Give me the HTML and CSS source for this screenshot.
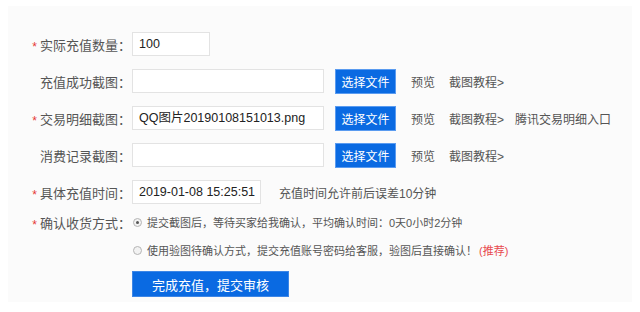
FILE: index.html
```html
<!DOCTYPE html>
<html lang="zh-CN">
<head>
<meta charset="utf-8">
<title>充值提交</title>
<link rel="stylesheet" href="styles.css">
</head>
<body>
<div class="panel">
  <div class="row">
    <div class="label"><span class="star">*</span>实际充值数量：</div>
    <div class="input small">100</div>
  </div>
  <div class="row">
    <div class="label">充值成功截图：</div>
    <div class="input wide"></div>
    <button class="btn">选择文件</button>
    <a class="link">预览</a>
    <a class="link">截图教程&gt;</a>
  </div>
  <div class="row">
    <div class="label"><span class="star">*</span>交易明细截图：</div>
    <div class="input wide">QQ图片20190108151013.png</div>
    <button class="btn">选择文件</button>
    <a class="link">预览</a>
    <a class="link">截图教程&gt;</a>
    <a class="link entry">腾讯交易明细入口</a>
  </div>
  <div class="row">
    <div class="label">消费记录截图：</div>
    <div class="input wide"></div>
    <button class="btn">选择文件</button>
    <a class="link">预览</a>
    <a class="link">截图教程&gt;</a>
  </div>
  <div class="row time-row">
    <div class="label"><span class="star">*</span>具体充值时间：</div>
    <div class="input time">2019-01-08 15:25:51</div>
    <span class="hint">充值时间允许前后误差10分钟</span>
  </div>
  <div class="row radio-row first">
    <div class="label"><span class="star">*</span>确认收货方式：</div>
    <span class="radio checked"></span>
    <span class="radio-text">提交截图后，等待买家给我确认，平均确认时间：0天0小时2分钟</span>
  </div>
  <div class="row radio-row second">
    <div class="label"></div>
    <span class="radio"></span>
    <span class="radio-text">使用验图待确认方式，提交充值账号密码给客服，验图后直接确认！<span class="rec">(推荐)</span></span>
  </div>
  <div class="row submit-row">
    <div class="label"></div>
    <button class="submit">完成充值，提交审核</button>
  </div>
</div>
</body>
</html>
```
FILE: styles.css
```css
html, body {
  margin: 0;
  padding: 0;
  background: #ffffff;
}
body {
  font-family: "Liberation Sans", "Noto Sans CJK SC", sans-serif;
  color: #555;
}
.panel {
  margin: 6px 8px 0 8px;
  height: 296px;
  background: #fbfbfb;
  padding-top: 26px;
  box-sizing: border-box;
}
.row {
  display: flex;
  align-items: center;
  height: 24px;
  margin-bottom: 13px;
}
.label {
  width: 123px;
  margin-right: 1px;
  text-align: right;
  font-size: 13px;
  color: #555;
  flex: none;
  white-space: nowrap;
}
.star {
  color: #e53935;
  font-size: 12px;
  margin-right: 3px;
  position: relative;
  top: 1px;
}
.input {
  height: 24px;
  box-sizing: border-box;
  border: 1px solid #e3e3e3;
  background: #fff;
  font-size: 12.5px;
  color: #222;
  padding-left: 6px;
  line-height: 22px;
  white-space: nowrap;
  overflow: hidden;
  flex: none;
}
.input.small { width: 78px; }
.input.wide { width: 192px; }
.input.time { width: 129px; }
.btn {
  margin-left: 11px;
  width: 61px;
  height: 25px;
  box-sizing: border-box;
  background: #0a6ae2;
  border: 1px solid #5a9bf0;
  color: #fff;
  font-family: inherit;
  font-size: 12px;
  padding: 0;
  flex: none;
}
.link {
  font-size: 12px;
  color: #555;
  margin-left: 14px;
  white-space: nowrap;
}
.btn + .link { margin-left: 15px; }
.link.entry { margin-left: 11px; }
.hint {
  margin-left: 18px;
  font-size: 12px;
  color: #555;
}
.time-row { margin-bottom: 10px; }
.radio-row {
  height: 16px;
}
.radio-row.first { margin-bottom: 12px; }
.radio {
  width: 9px;
  height: 9px;
  box-sizing: border-box;
  border: 1px solid #b5b5b5;
  border-radius: 50%;
  background: #f2f2f2;
  margin-left: 1px;
  margin-right: 5px;
  flex: none;
  display: flex;
  align-items: center;
  justify-content: center;
}
.radio.checked::after {
  content: "";
  width: 3px;
  height: 3px;
  border-radius: 50%;
  background: #555;
}
.radio-text {
  font-size: 11px;
  color: #555;
  white-space: nowrap;
}
.rec {
  color: #e8494e;
  margin-left: 2px;
}
.submit-row {
  height: 26px;
  margin-top: 2px;
}
.submit {
  width: 157px;
  height: 26px;
  background: #0a6ae2;
  border: 1px solid #3d86e6;
  color: #fff;
  font-family: inherit;
  font-size: 13px;
  padding: 0;
}
```
